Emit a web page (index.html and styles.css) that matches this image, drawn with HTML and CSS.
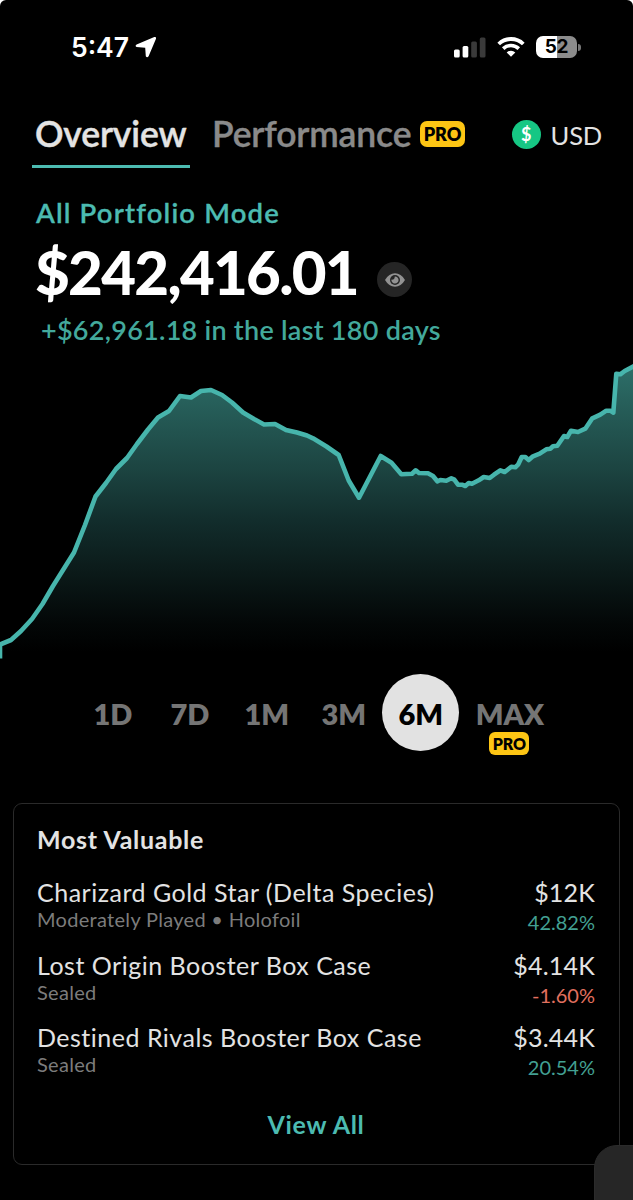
FILE: index.html
```html
<!DOCTYPE html>
<html lang="en">
<head>
    <meta charset="utf-8" />
    <title>Portfolio</title>
    <link rel="stylesheet" href="styles.css">
</head>
<body>
    <div class="screen">
        <div class="status">
            <span class="time">5:47</span>
            <svg class="location" width="22" height="22" viewBox="0 0 22 22">
                <path d="M19.3 1 L1.6 8.4 Q-0.4 9.8 1.6 11 L10.2 11.8 L10.8 20.2 Q12 22.2 13.6 20.2 L21 2.7 Q21.4 0.4 19.3 1 Z" fill="#fff"/>
            </svg>
            <svg class="signal" width="32" height="21" viewBox="0 0 32 21">
                <rect x="0" y="12.5" width="5.7" height="8" rx="1.5" fill="#fff"/>
                <rect x="8.6" y="9" width="5.7" height="11.5" rx="1.5" fill="#fff"/>
                <rect x="17.2" y="4.5" width="5.7" height="16" rx="1.5" fill="#3a3a3a"/>
                <rect x="25.8" y="0.5" width="5.7" height="20" rx="1.5" fill="#3a3a3a"/>
            </svg>
            <svg class="wifi" width="28" height="20" viewBox="0 0 28 20" fill="none" stroke="#fff">
                <path d="M1.7 7 A17.6 17.6 0 0 1 26.3 7" stroke-width="3.8"/>
                <path d="M6.2 11.6 A11.2 11.2 0 0 1 21.8 11.6" stroke-width="3.6"/>
                <path d="M14 19.8 L9.7 15.4 A6.2 6.2 0 0 1 18.3 15.4 Z" fill="#fff" stroke="none"/>
            </svg>
            <div class="battery">52</div>
            <span class="battery-tip"></span>
        </div>

        <div class="nav">
            <a class="nav-item active">Overview</a>
            <a class="nav-item performance">Performance</a>
            <span class="pro">PRO</span>
            <div class="currency">
                <span class="coin">$</span>
                <span>USD</span>
            </div>
        </div>

        <div class="summary">
            <p class="mode">All Portfolio Mode</p>
            <div class="balance">
                <span class="amount">$242,416.01</span>
                <span class="eye">
                    <svg width="20" height="14" viewBox="0 0 20 14">
                        <path d="M0 7 Q4 0.3 10 0.3 Q16 0.3 20 7 Q16 13.7 10 13.7 Q4 13.7 0 7 Z" fill="#929292"/>
                        <circle cx="10" cy="7" r="5" fill="#252525"/>
                        <path d="M9.8 3.4 A3.6 3.6 0 1 1 6.4 6.6 Q9.6 7 9.8 3.4 Z" fill="#929292"/>
                    </svg>
                </span>
            </div>
            <p class="change">+$62,961.18 in the last 180 days</p>
        </div>

        <svg class="chart" width="633" height="310" viewBox="0 350 633 310">
            <defs>
                <linearGradient id="fade" gradientUnits="userSpaceOnUse" x1="0" y1="366" x2="0" y2="652">
                    <stop offset="0" stop-color="#2d6f69"/>
                    <stop offset="0.12" stop-color="#27605b"/>
                    <stop offset="0.36" stop-color="#1c4441"/>
                    <stop offset="0.54" stop-color="#122d2c"/>
                    <stop offset="0.72" stop-color="#0b1a19"/>
                    <stop offset="0.9" stop-color="#030707"/>
                    <stop offset="1" stop-color="#000"/>
                </linearGradient>
            </defs>
            <path fill="url(#fade)" d="M0 660 L0 644.5 11 640 21 631 32 619 42.5 604 53 586 74 552.5 85 525 95.5 496.5 106 483 116 469 127 458 137 444 148 429.5 158 417.5 169 411 180 396 191 397.5 201 391 211 390 222 395 232 402.5 243 412.5 254 419 264 424.5 275 424 286 430 297 432.5 307 435.5 313 438.3 326.5 446.5 338.7 455 348.7 480.5 359 497.7 380.7 456 391.5 462.7 401.3 474.3 412 473.7 415.7 470.3 419 473 428 473.3 433 476 437.3 481.3 440.3 480 446.3 480.7 451.3 478.3 454.3 479.7 458 484.7 462 484.7 465.3 486 468.7 483 472 483.7 478.7 480.3 483.7 477 489.7 478 494 474.7 500.3 470.3 504.7 472 511.3 466.7 515.3 467.3 518.3 464.3 521.7 457 525.3 457 528.7 460 533 456.3 539.7 453.7 546.3 449.3 550.3 448.7 553 446.3 557.3 445.7 564 436 567.3 437 571 430.7 578 432 585.3 428.7 592.3 418.3 600.3 414.7 606.3 410.7 610.3 410.7 613.3 412.7 616.3 373.7 620.3 374.3 624.7 371 635 365.5 635 660 Z"/>
            <path class="line" d="M0 658.5 L0 644.5 11 640 21 631 32 619 42.5 604 53 586 74 552.5 85 525 95.5 496.5 106 483 116 469 127 458 137 444 148 429.5 158 417.5 169 411 180 396 191 397.5 201 391 211 390 222 395 232 402.5 243 412.5 254 419 264 424.5 275 424 286 430 297 432.5 307 435.5 313 438.3 326.5 446.5 338.7 455 348.7 480.5 359 497.7 380.7 456 391.5 462.7 401.3 474.3 412 473.7 415.7 470.3 419 473 428 473.3 433 476 437.3 481.3 440.3 480 446.3 480.7 451.3 478.3 454.3 479.7 458 484.7 462 484.7 465.3 486 468.7 483 472 483.7 478.7 480.3 483.7 477 489.7 478 494 474.7 500.3 470.3 504.7 472 511.3 466.7 515.3 467.3 518.3 464.3 521.7 457 525.3 457 528.7 460 533 456.3 539.7 453.7 546.3 449.3 550.3 448.7 553 446.3 557.3 445.7 564 436 567.3 437 571 430.7 578 432 585.3 428.7 592.3 418.3 600.3 414.7 606.3 410.7 610.3 410.7 613.3 412.7 616.3 373.7 620.3 374.3 624.7 371 635 365.5"/>
        </svg>

        <div class="ranges">
            <a class="range">1D</a>
            <a class="range">7D</a>
            <a class="range">1M</a>
            <a class="range">3M</a>
            <a class="range selected">6M</a>
            <a class="range max">MAX<span class="pro small">PRO</span></a>
        </div>

        <div class="card">
            <h2>Most Valuable</h2>
            <div class="item">
                <div>
                    <p class="name">Charizard Gold Star (Delta Species)</p>
                    <p class="detail">Moderately Played • Holofoil</p>
                </div>
                <div class="value">
                    <p class="price">$12K</p>
                    <p class="percent">42.82%</p>
                </div>
            </div>
            <div class="item">
                <div>
                    <p class="name">Lost Origin Booster Box Case</p>
                    <p class="detail">Sealed</p>
                </div>
                <div class="value">
                    <p class="price">$4.14K</p>
                    <p class="percent down">-1.60%</p>
                </div>
            </div>
            <div class="item">
                <div>
                    <p class="name">Destined Rivals Booster Box Case</p>
                    <p class="detail">Sealed</p>
                </div>
                <div class="value">
                    <p class="price">$3.44K</p>
                    <p class="percent">20.54%</p>
                </div>
            </div>
            <a class="view-all">View All</a>
        </div>

        <div class="drawer"></div>
    </div>
</body>
</html>
```
FILE: styles.css
```css
* {
  margin: 0;
  padding: 0;
  box-sizing: border-box;
}

body {
  background: #fff;
  font-family: "Lato", sans-serif;
  color: #e3e3e3;
}

.screen {
  position: relative;
  width: 633px;
  height: 1200px;
  overflow: hidden;
  background: #000;
  border-radius: 6px 6px 0 0;
}

/* status bar */
.status {
  display: flex;
  align-items: center;
  height: 94px;
  padding: 0 53px 0 71px;
}

.time {
  font-family: "Inter", sans-serif;
  font-size: 26.5px;
  font-weight: 600;
  color: #fff;
}

.location {
  margin-left: 6px;
}

.signal {
  margin-left: auto;
}

.wifi {
  margin-left: 11px;
}

.battery {
  width: 41px;
  height: 22px;
  margin-left: 11px;
  border-radius: 7px;
  background: linear-gradient(to right, #fff 21px, #8c8c8c 21px);
  font: 700 19px/22px "Inter", sans-serif;
  letter-spacing: -0.3px;
  text-align: center;
  color: #000;
}

.battery-tip {
  width: 3px;
  height: 7px;
  margin: 0 -1px 0 1px;
  border-radius: 0 3px 3px 0;
  background: #777;
}

/* top navigation */
.nav {
  display: flex;
  height: 74px;
  padding: 18px 31px 0 32px;
}

.nav-item {
  height: 56px;
  font-size: 35.5px;
  line-height: 44px;
  font-weight: 600;
  letter-spacing: -0.15px;
  -webkit-text-stroke: 0.4px;
  color: #e3e3e3;
}

.nav-item.active {
  width: 158px;
  padding-left: 3px;
  border-bottom: 3px solid #4cbbb1;
}

.nav-item.performance {
  width: 208px;
  margin-left: 22px;
  color: #8a8a8a;
}

.pro {
  width: 45px;
  height: 26px;
  margin-top: 9px;
  border-radius: 7px;
  background: #fdc514;
  color: #000;
  font-size: 18px;
  line-height: 26px;
  font-weight: 800;
  text-align: center;
}

.pro.small {
  position: absolute;
  left: 30px;
  top: 58px;
  width: 40px;
  height: 23px;
  margin: 0;
  border-radius: 6px;
  font-size: 16px;
  line-height: 23px;
}

.currency {
  display: flex;
  align-items: center;
  height: 44px;
  margin-left: auto;
  gap: 10px;
  font-size: 25.5px;
  line-height: 32px;
  letter-spacing: -0.2px;
}

.currency span:last-child {
  padding-top: 2px;
}

.coin {
  width: 29px;
  height: 29px;
  border-radius: 50%;
  background: #16c784;
  color: #fff;
  font-size: 18px;
  line-height: 28px;
  font-weight: 700;
  text-align: center;
}

/* balance */
.summary {
  height: 182px;
  padding: 29px 36px 0;
}

.mode {
  font-size: 27.5px;
  line-height: 32px;
  font-weight: 600;
  letter-spacing: 1.15px;
  -webkit-text-stroke: 0.3px;
  color: #4cbbb1;
}

.balance {
  display: flex;
  align-items: center;
  height: 85px;
}

.amount {
  width: 341px;
  margin-left: -1px;
  font-size: 60px;
  line-height: 72px;
  font-weight: 900;
  letter-spacing: -1.7px;
  color: #fff;
}

.eye {
  display: flex;
  align-items: center;
  justify-content: center;
  width: 35px;
  height: 35px;
  margin: 16px 0 0 1px;
  border-radius: 50%;
  background: #252525;
}

.change {
  padding-left: 5px;
  font-size: 27px;
  line-height: 32px;
  font-weight: 600;
  letter-spacing: 0.27px;
  color: #43a99c;
}

.chart {
  display: block;
}

.chart .line {
  fill: none;
  stroke: #47b5ac;
  stroke-width: 4.6;
  stroke-linejoin: round;
}

/* time ranges */
.ranges {
  display: flex;
  height: 143px;
  padding: 14px 0 0 74.4px;
}

.range {
  position: relative;
  width: 77px;
  height: 77px;
  font-size: 29px;
  line-height: 79px;
  font-weight: 800;
  text-align: center;
  color: #757575;
}

.range.selected {
  border-radius: 50%;
  background: #e2e2e2;
  color: #000;
}

.range.max {
  width: 101px;
}

/* most valuable */
.card {
  width: 607px;
  height: 362px;
  margin-left: 13px;
  padding: 20px 24px 0 23px;
  border: 1.5px solid #2a2a2a;
  border-radius: 9px;
}

.card h2 {
  height: 53px;
  font-size: 25px;
  line-height: 31px;
  font-weight: 700;
  letter-spacing: 0.7px;
}

.item {
  display: flex;
  justify-content: space-between;
  height: 72.5px;
}

.name,
.price {
  font-size: 25px;
  line-height: 30px;
  letter-spacing: 0.5px;
}

.price {
  letter-spacing: 0.2px;
}

.detail {
  font-size: 20px;
  line-height: 25px;
  letter-spacing: 0.3px;
  color: #7c7c7c;
}

.value {
  text-align: right;
}

.percent {
  font-size: 20px;
  line-height: 31px;
  color: #43a093;
}

.percent.down {
  color: #e2705f;
}

.view-all {
  display: block;
  margin-top: 14px;
  font-size: 25px;
  line-height: 30px;
  font-weight: 700;
  letter-spacing: 0.7px;
  text-align: center;
  color: #4cbbb1;
}

/* collapsed drawer in the corner */
.drawer {
  position: absolute;
  left: 594px;
  top: 1145px;
  width: 60px;
  height: 70px;
  border: 1px solid #2b2b2b;
  border-radius: 23px 0 0 0;
  background: #262626;
}
```
